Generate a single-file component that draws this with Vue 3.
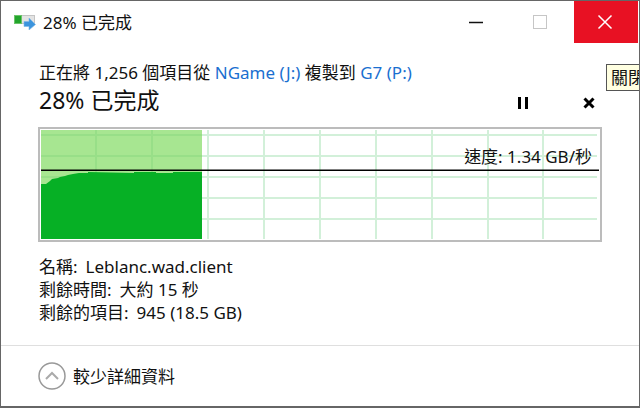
<script setup>
import { computed } from 'vue'

const percent = 28
const title = `${percent}% 已完成`
const details = [
  { label: '名稱:', value: 'Leblanc.wad.client' },
  { label: '剩餘時間:', value: '大約 15 秒' },
  { label: '剩餘的項目:', value: '945 (18.5 GB)' },
]

const gridX = [56, 112, 168, 224, 280, 336, 392, 448, 503]
const gridY = [6, 27, 48, 69, 90]
const speeds = [
  [0, 54], [5, 54], [9, 51], [11, 49], [17, 48], [19, 47], [24, 46],
  [27, 45], [32, 44], [38, 43], [47, 43], [47, 42], [93, 43], [93, 42],
  [115, 42], [115, 43], [132, 43], [132, 42], [161, 42],
]
const area = computed(
  () => 'M0 109 ' + speeds.map(([x, y]) => `L${x} ${y}`).join(' ') + ' L161 109 Z'
)
</script>

<template>
  <main class="window">
    <header class="titlebar">
      <svg class="app-icon" width="22" height="16" viewBox="0 0 22 16" aria-hidden="true">
        <rect x="0.5" y="1.5" width="20" height="8" fill="#e3e3e3" stroke="#c4c4c4" />
        <rect x="0" y="1" width="8" height="9" fill="#6cc46a" />
        <rect x="1" y="2" width="6" height="7" fill="#23a52c" />
        <path d="M10 7.500h5V4l6.500 6.500-6.500 5.500v-3.500H10z" fill="#3c94dd" stroke="#7db8e8" stroke-width="0.600" />
      </svg>
      <h1>{{ title }}</h1>
      <div class="caption">
        <button type="button" aria-label="最小化">
          <svg width="16" height="16" viewBox="0 0 16 16"><path d="M1 8.500h14" stroke="#111" stroke-width="1.500" /></svg>
        </button>
        <button type="button" aria-label="最大化" disabled>
          <svg width="16" height="16" viewBox="0 0 16 16"><rect x="1.500" y="1.500" width="13" height="13" fill="none" stroke="#c6c6c6" /></svg>
        </button>
        <button type="button" class="close" aria-label="關閉">
          <svg width="16" height="16" viewBox="0 0 16 16"><path d="M1.500 1.500l13 13M14.500 1.500l-13 13" stroke="#fff" stroke-width="1.500" /></svg>
        </button>
      </div>
    </header>

    <section class="content">
      <p class="route">正在將 1,256 個項目從 <a href="#source">NGame (J:)</a> 複製到 <a href="#target">G7 (P:)</a></p>
      <div class="status">
        <h2>{{ title }}</h2>
        <div class="actions">
          <button type="button" aria-label="暫停">
            <svg width="12" height="12" viewBox="0 0 12 12"><path d="M2.500 0v12M9.500 0v12" stroke="#000" stroke-width="3" /></svg>
          </button>
          <button type="button" aria-label="取消">
            <svg width="12" height="12" viewBox="0 0 12 12"><path d="M1.500 1.500l9 9M10.500 1.500l-9 9" stroke="#000" stroke-width="3" /></svg>
          </button>
        </div>
      </div>

      <div class="chart">
        <svg viewBox="0 0 558 109" preserveAspectRatio="none" aria-hidden="true">
          <g fill="#d2f0d9">
            <rect v-for="x in gridX" :key="x" :x="x - 2" width="2" height="109" />
            <rect v-for="y in gridY" :key="y" :y="y - 2" width="556" height="2" />
          </g>
          <rect width="161" height="109" fill="#a7e691" />
          <g fill="#98df88">
            <rect v-for="x in gridX.slice(0, 2)" :key="x" :x="x - 2" width="2" height="109" />
            <rect v-for="y in gridY" :key="y" :y="y - 2" width="161" height="2" />
          </g>
          <path :d="area" fill="#06b025" />
          <rect y="39.500" width="558" height="1.500" fill="#000" />
        </svg>
        <span class="speed">速度: 1.34 GB/秒</span>
      </div>

      <dl class="details">
        <div v-for="item in details" :key="item.label">
          <dt>{{ item.label }}</dt>
          <dd>{{ item.value }}</dd>
        </div>
      </dl>
    </section>

    <footer class="footer">
      <button type="button" class="toggle">
        <svg width="28" height="28" viewBox="0 0 28 28" aria-hidden="true">
          <circle cx="14" cy="14" r="13" fill="none" stroke="#999" stroke-width="1.500" />
          <path d="M8 17l6-6 6 6" fill="none" stroke="#aaa" stroke-width="2" />
        </svg>
        <span>較少詳細資料</span>
      </button>
    </footer>

    <div class="tooltip" role="tooltip">關閉</div>
  </main>
</template>

<style>
body {
  background: #fff;
}
</style>

<style scoped>
.window {
  position: relative;
  box-sizing: border-box;
  min-height: 100vh;
  display: flex;
  flex-direction: column;
  overflow: hidden;
  border: 1px solid #666;
  border-bottom-width: 2px;
  background: #fff;
  color: #111;
  font: 17px/23px "Noto Sans", "Noto Sans CJK TC", sans-serif;
}
h1, h2, p, dl, dd {
  margin: 0;
  font-weight: 400;
}
button {
  display: flex;
  align-items: center;
  justify-content: center;
  padding: 0;
  border: 0;
  background: none;
  color: inherit;
  font: inherit;
}
.titlebar {
  display: flex;
  align-items: center;
  height: 42px;
  padding: 0 1px 0 13px;
}
.app-icon {
  margin-right: 7px;
}
h1 {
  flex: 1;
  font-size: 17px;
}
.caption {
  display: flex;
  align-self: stretch;
}
.caption button {
  width: 64px;
  padding-right: 4px;
}
.caption .close {
  padding-right: 2px;
  background: #e81123;
}
.content {
  flex: 1;
  padding: 18px 37px 0;
}
.route,
h2,
.details {
  padding-left: 1px;
}
.route {
  white-space: nowrap;
}
a {
  color: #1a6fd0;
  text-decoration: none;
}
.status {
  display: flex;
  align-items: center;
  justify-content: space-between;
  height: 32px;
}
h2 {
  font-size: 23px;
}
.actions {
  display: flex;
  gap: 42px;
  padding: 5px 1px 0 0;
}
.actions button {
  width: 24px;
  height: 24px;
}
.chart {
  position: relative;
  margin-top: 11px;
  padding: 1px;
  border: 2px solid #bcbcbc;
}
.chart svg {
  display: block;
  width: 100%;
  height: 109px;
}
.speed {
  position: absolute;
  top: 16px;
  right: 8px;
}
.details {
  margin-top: 13px;
}
.details div {
  display: flex;
  gap: 8px;
}
.footer {
  padding: 16px 37px;
  border-top: 1px solid #dfdfdf;
}
.toggle {
  gap: 7px;
}
.tooltip {
  position: absolute;
  top: 63px;
  left: calc(100% - 33px);
  padding: 1px 4px;
  border: 1px solid #555;
  background: #ffffe1;
  white-space: nowrap;
}
</style>
